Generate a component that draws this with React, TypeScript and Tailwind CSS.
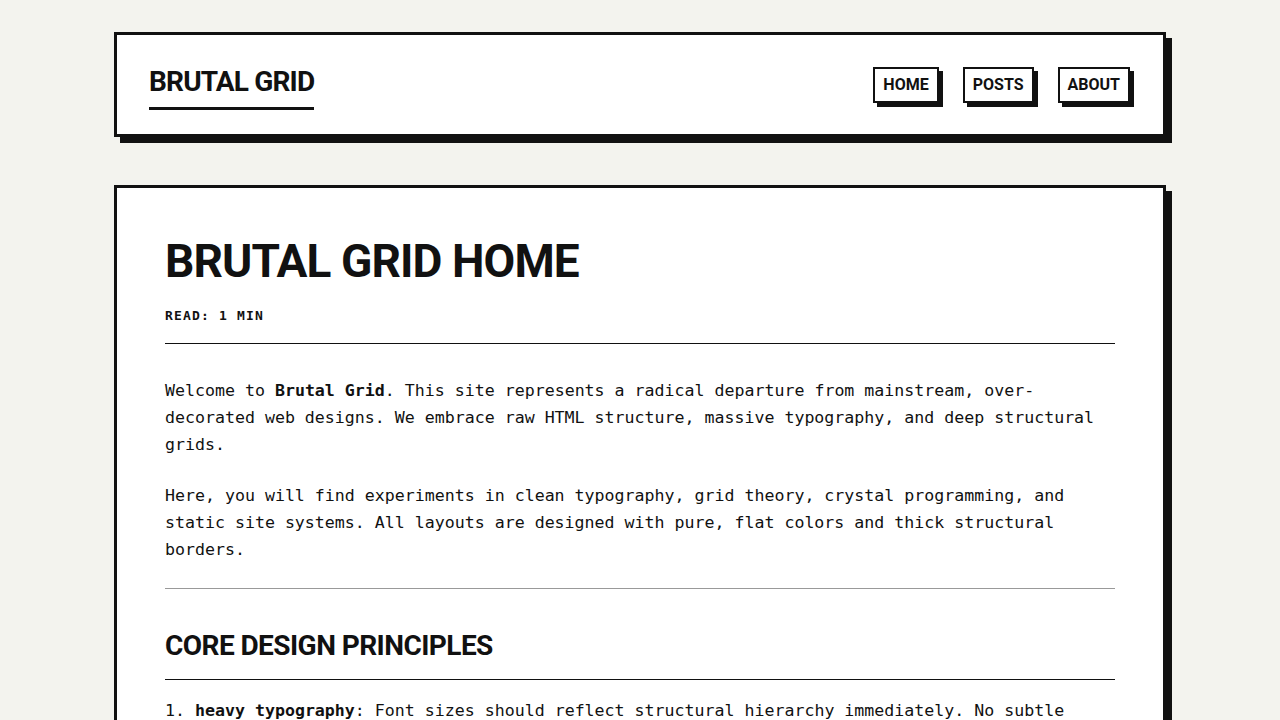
import React from "react";

const HEAD = "font-['Roboto','Inter',sans-serif]";
const MONO = "font-['DejaVu_Sans_Mono','Liberation_Mono',monospace]";

const NAV = ["HOME", "POSTS", "ABOUT"];

function App() {
  return (
    <div className="min-h-screen bg-[#f3f3ee] pt-8 pb-16 text-[#111111]">
      {/* --- HEADER --- */}
      <header className="w-[1052px] mx-auto bg-white border-[3px] border-[#111111] shadow-[6px_6px_0_#111111] h-[105px] px-8 flex items-center justify-between">
        <h1
          className={`${HEAD} text-[28px] font-bold leading-[1.2] tracking-[-0.03em] border-b-[3px] border-[#111111] pb-[9px] mt-[6px]`}
        >
          BRUTAL GRID
        </h1>
        <nav className="flex gap-6 mr-[1px]">
          {NAV.map((item) => (
            <a
              key={item}
              href="#"
              className={`${HEAD} text-base font-bold leading-6 px-2 py-1 border-2 border-[#111111] bg-white shadow-[4px_4px_0_#111111]`}
            >
              {item}
            </a>
          ))}
        </nav>
      </header>

      {/* --- ARTICLE --- */}
      <main className="w-[1052px] mx-auto mt-12 bg-white border-[3px] border-[#111111] shadow-[6px_6px_0_#111111] p-12">
        <div className="border-b border-[#111111] pb-[18px] mb-[33px]">
          <h2
            className={`${HEAD} text-[46px] font-bold leading-[1.1] tracking-[-0.02em]`}
          >
            BRUTAL GRID HOME
          </h2>
          <p className={`${MONO} text-[13px] font-bold mt-[19px] tracking-[0.09em]`}>
            READ: 1 MIN
          </p>
        </div>

        <div className={`${MONO} text-[16.6px] leading-[27px]`}>
          <p className="mb-6">
            Welcome to <strong>Brutal Grid</strong>. This site represents a
            radical departure from mainstream, over-decorated web designs. We
            embrace raw HTML structure, massive typography, and deep structural
            grids.
          </p>
          <p>
            Here, you will find experiments in clean typography, grid theory,
            crystal programming, and static site systems. All layouts are
            designed with pure, flat colors and thick structural borders.
          </p>
          <hr className="mt-[25px] border-0 border-t border-[#999999]" />
        </div>

        <h3
          className={`${HEAD} text-[28px] font-bold leading-[1.2] tracking-[-0.02em] mt-10 pb-[16px] border-b border-[#111111] mb-[17px]`}
        >
          CORE DESIGN PRINCIPLES
        </h3>

        <ol className={`${MONO} text-[16.6px] leading-[27px] list-decimal list-inside space-y-2`}>
          <li>
            <strong>heavy typography</strong>: Font sizes should reflect
            structural hierarchy immediately. No subtle shifts, no timid
            weights.
          </li>
          <li>
            <strong>flat colors</strong>: No gradients, no blur, no soft
            shadows. Every surface is a solid block.
          </li>
          <li>
            <strong>thick borders</strong>: Structure is shown, never hidden.
          </li>
        </ol>
      </main>
    </div>
  );
}

export default App;
